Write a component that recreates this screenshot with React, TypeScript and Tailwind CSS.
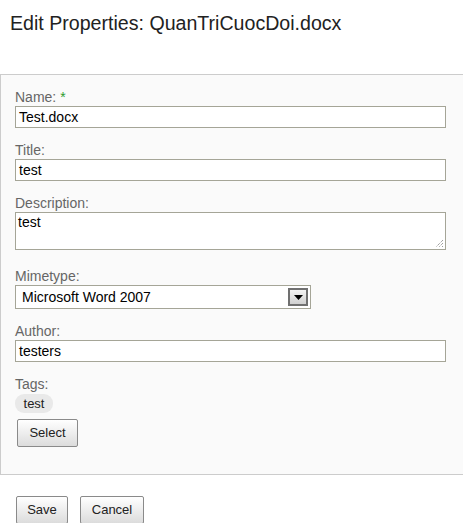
import React from "react";

const font = { fontFamily: '"Liberation Sans", Arial, sans-serif' };

function Label({ children }: { children: React.ReactNode }) {
  return <div className="h-[16px] text-[14px] leading-[16px] text-[#666666] mb-[1px]">{children}</div>;
}

function TextInput({ value }: { value: string }) {
  return (
    <div className="h-[22px] w-[431px] border border-[#a5a597] bg-white px-[3px] text-[14px] leading-[20px] text-black">
      {value}
    </div>
  );
}

function Btn({ children, w }: { children: React.ReactNode; w: string }) {
  return (
    <div
      className={`h-[28px] ${w} flex items-center justify-center rounded-[2px] border border-[#8a8a8a] bg-gradient-to-b from-white to-[#dcdcdc] text-[13px] text-[#222]`}
    >
      {children}
    </div>
  );
}

export default function App() {
  return (
    <div className="w-[463px] h-[523px] overflow-hidden bg-white" style={font}>
      <div className="pt-[11px] pl-[10px] h-[74px] text-[19.6px] leading-[24px] text-[#222]">
        Edit Properties: QuanTriCuocDoi.docx
      </div>
      <div className="w-[480px] border-t border-b border-l border-[#cccccc] bg-[#fafafa] pl-[14px] pt-[14px] pb-[27px]">
        <Label>
          Name: <span className="text-[#2e9a2e]">*</span>
        </Label>
        <TextInput value="Test.docx" />
        <div className="h-[14px]" />
        <Label>Title:</Label>
        <TextInput value="test" />
        <div className="h-[14px]" />
        <Label>Description:</Label>
        <div className="relative h-[38px] w-[431px] border border-[#a5a597] bg-white px-[2px] pt-[1px] text-[14px] leading-[17px] text-black">
          test
          <svg className="absolute right-[1px] bottom-[1px]" width="9" height="9" viewBox="0 0 9 9">
            <path d="M8 1 L1 8 M8 4 L4 8 M8 7 L7 8" stroke="#777" strokeWidth="1" strokeDasharray="1 1" />
          </svg>
        </div>
        <div className="h-[18px]" />
        <Label>Mimetype:</Label>
        <div className="flex h-[24px] w-[296px] items-center justify-between border border-[#a5a597] bg-white pl-[6px] pr-[2px] text-[14px] text-black">
          <span>Microsoft Word 2007</span>
          <div className="flex h-[18px] w-[20px] items-center justify-center border-2 border-[#707070] bg-gradient-to-b from-[#f4f4f4] to-[#d0d0d0]">
            <svg width="9" height="5" viewBox="0 0 9 5">
              <path d="M0 0 H9 L4.5 5 Z" fill="#000" />
            </svg>
          </div>
        </div>
        <div className="h-[14px]" />
        <Label>Author:</Label>
        <TextInput value="testers" />
        <div className="h-[14px]" />
        <Label>Tags:</Label>
        <div className="mt-[2px] flex h-[19px] w-[38px] items-center justify-center rounded-[9px] bg-[#e9e9e9] text-[13px] text-[#222]">
          test
        </div>
        <div className="mt-[6px] ml-[2px]">
          <Btn w="w-[61px]">Select</Btn>
        </div>
      </div>
      <div className="flex gap-[12px] pl-[16px] pt-[21px]">
        <Btn w="w-[52px]">Save</Btn>
        <Btn w="w-[64px]">Cancel</Btn>
      </div>
    </div>
  );
}
